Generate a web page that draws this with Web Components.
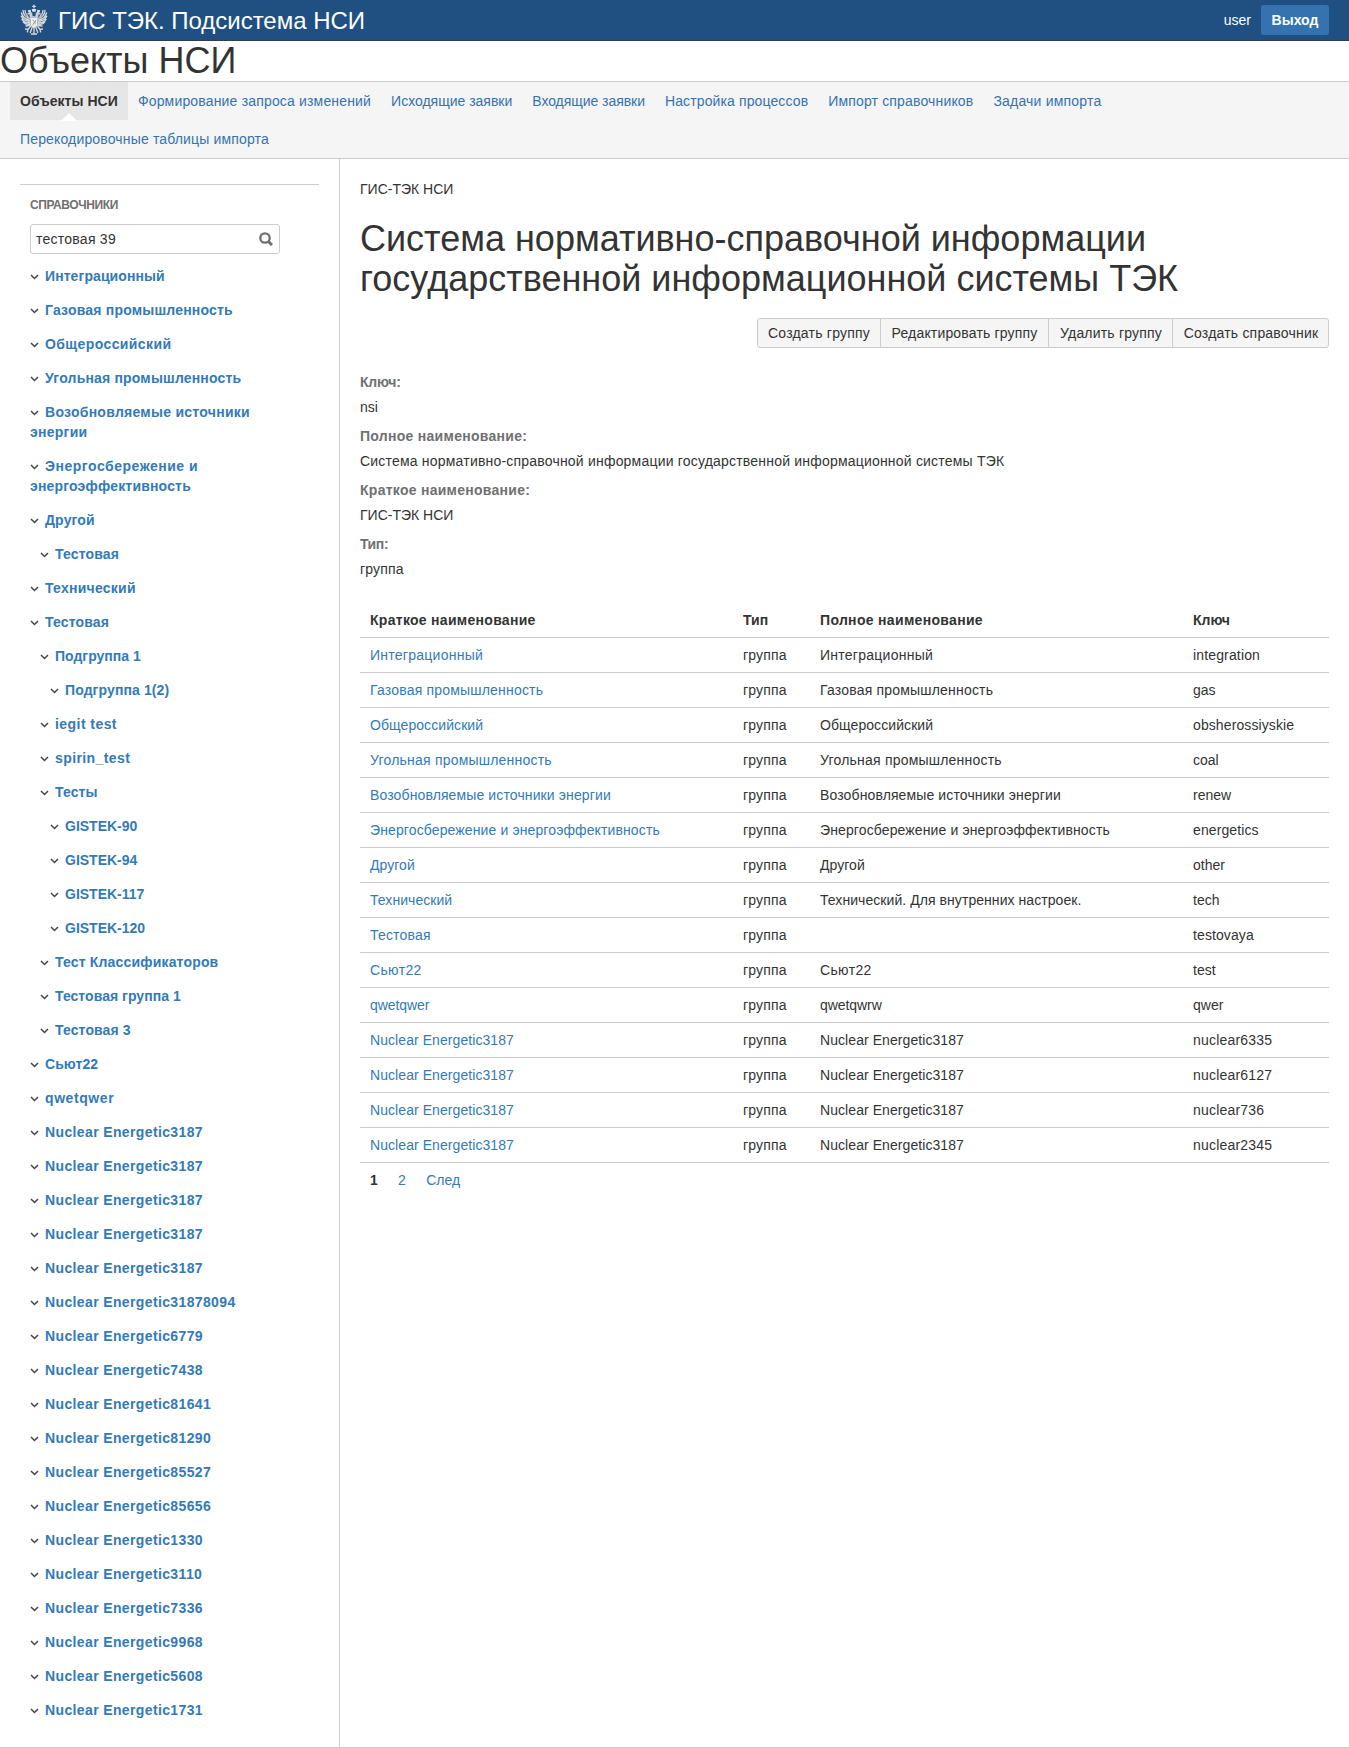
<!DOCTYPE html>
<html lang="ru">
<head>
<meta charset="utf-8">
<title>ГИС ТЭК. Подсистема НСИ</title>
<style>
html,body{margin:0;padding:0;background:#fff}
body{font:14px/20px "Liberation Sans",Arial,sans-serif;color:#333}
</style>
</head>
<body>
<nsi-app></nsi-app>
<script>
const define = (name, html) => customElements.define(name, class extends HTMLElement {
  connectedCallback() {
    if (this.shadowRoot) return;
    this.attachShadow({ mode: 'open' }).innerHTML = typeof html === 'function' ? html(this) : html;
  }
});
const ls = v => `style="letter-spacing:${v}px"`;

define('nsi-emblem', `
<style>:host{display:block;width:28px;height:32px}svg{display:block}</style>
<svg width="28" height="32" viewBox="0 0 28 32" fill="none" stroke="#d8d9db" stroke-linecap="round">
  <path d="M14 1v3M12.700 2.400h2.600" stroke-width="1.200"/>
  <path d="M11.800 5h4.400l-.6 2.700h-3.200zM7.800 6.300l2.800-.6.400 2.300H8.200zM20.200 6.300l-2.800-.6-.4 2.300h2.800z" fill="#e2e2e3" stroke="none"/>
  <path d="M11.400 8.300c-2-.9-4 .2-4.400 2.200l2.500.1c-.2 2 .4 3 2 4.500h5c1.600-1.500 2.200-2.500 2-4.500l2.500-.1c-.4-2-2.400-3.100-4.400-2.200-.9.500-1.200 2-1.100 4h-3c.1-2-.2-3.500-1.100-4z" fill="#cfd0d2" stroke="none"/>
  <g stroke-width="1.350">
    <path d="M10.500 14.500C6.500 14 3.500 11 3 6.500M9.500 16C5.500 15.500 2.500 13 1.500 9M9.500 17.300C6 17.300 2.800 15.500 1.300 12.300M9.800 18.700C7 19 3.600 18 2 15.300M10.200 20C8 20.600 5 20 3.500 18.200M8 12.500C6 11 5.300 9.500 5 6.500M10 21.300L6 22"/>
    <path d="M17.500 14.500C21.500 14 24.500 11 25 6.500M18.500 16C22.500 15.500 25.500 13 26.500 9M18.500 17.300C22 17.300 25.200 15.500 26.700 12.300M18.200 18.700C21 19 24.400 18 26 15.300M17.800 20C20 20.600 23 20 24.500 18.200M20 12.500C22 11 22.700 9.500 23 6.500M18 21.300L22 22"/>
    <path d="M11 21.500L8 25.500 5.500 25M8 25.500l-.6 2.300M17 21.500l3 4 2.500-.5M20 25.500l.6 2.300M14 23v7M12.300 23l-2 5.500M15.700 23l2 5.500M11.500 30h5"/>
  </g>
  <path d="M10.300 13.500h7.400V20c0 2-1.700 3.200-3.700 4.200-2-1-3.700-2.200-3.700-4.200z" fill="#eeeeef" stroke="#a5adb7" stroke-width=".6"/>
  <path d="M13 16l1.500 2-1.500 3M15.500 16.500l-.5 3" stroke="#858c94" stroke-width=".8"/>
</svg>`);

define('nsi-header', `
<style>
:host{display:flex;align-items:center;box-sizing:border-box;height:41px;padding:0 20px;background:#205081;border-bottom:1px solid #2e3d54;color:#fff}
.title{font-size:24px;line-height:38px;padding-top:2px;margin-left:10px;flex:1;letter-spacing:-.02px}
.user{margin-right:10px}
button{font:bold 14px/20px "Liberation Sans",Arial,sans-serif;color:#fff;background:#3572b0;border:0;border-radius:3px;height:30px;width:68px;padding:0}
</style>
<nsi-emblem></nsi-emblem><span class="title">ГИС ТЭК. Подсистема НСИ</span><span class="user">user</span><button>Выход</button>`);

define('nsi-nav-item', e => `
<style>
:host{display:block;position:relative;padding:9px 10px;line-height:20px;color:#3572b0;white-space:nowrap}
:host([selected]){background:#e6e6e6;color:#333;font-weight:bold}
svg{position:absolute;left:50%;margin-left:-8px;bottom:-1px}
</style><slot></slot>${e.hasAttribute('selected') ? '<svg width="16" height="8"><path d="M0 8L8 0l8 8z" fill="#fff"/></svg>' : ''}`);

const nav = [['Объекты НСИ', .05], ['Формирование запроса изменений', .17], ['Исходящие заявки', -.01], ['Входящие заявки', -.05], ['Настройка процессов', .12], ['Импорт справочников', .16], ['Задачи импорта', .2], ['Перекодировочные таблицы импорта', .155]];
define('nsi-nav', `
<style>:host{display:flex;flex-wrap:wrap;padding:0 10px;background:#f5f5f5;border:solid #ccc;border-width:1px 0}</style>
${nav.map(([t, s], i) => `<nsi-nav-item ${i ? '' : 'selected'} ${ls(s)}>${t}</nsi-nav-item>`).join('')}`);

define('nsi-search', `
<style>
:host{display:flex;align-items:center;box-sizing:border-box;width:250px;height:30px;border:1px solid #ccc;border-radius:3px;padding:0 6px 0 5px;background:#fff}
span{flex:1;letter-spacing:.25px}
</style>
<span>тестовая 39</span>
<svg width="14" height="14" fill="none" stroke="#707070" stroke-width="2.300"><circle cx="6" cy="6" r="4.700"/><path d="M9.500 9.500L13 13" stroke-width="3"/></svg>`);

define('nsi-tree-item', `
<style>
:host{display:block;padding:7px 0 7px calc(var(--level,0)*10px);width:238px;color:#337ab7;font-weight:bold}
svg{display:inline-block;width:9px;height:6px;margin-right:6px;vertical-align:1px}
</style><svg viewBox="0 0 9 6" fill="none" stroke="#444" stroke-width="1.500"><path d="M1 1l3.500 3.500L8 1"/></svg><slot></slot>`);

const tree = [[0,'Интеграционный',.08],[0,'Газовая промышленность',.2],[0,'Общероссийский',.4],[0,'Угольная промышленность',.18],[0,'Возобновляемые источники энергии',.27],[0,'Энергосбережение и <span style="letter-spacing:.18px">энергоэффективность</span>',.52],[0,'Другой',.15],[1,'Тестовая',.16],[0,'Технический',.25],[0,'Тестовая',.16],[1,'Подгруппа 1',0],[2,'Подгруппа 1(2)',.1],[1,'iegit test',.44],[1,'spirin_test',.4],[1,'Тесты',.1],[2,'GISTEK-90',0],[2,'GISTEK-94',0],[2,'GISTEK-117',0],[2,'GISTEK-120',0],[1,'Тест Классификаторов',.17],[1,'Тестовая группа 1',.04],[1,'Тестовая 3',.12],[0,'Сьют22',.05],[0,'qwetqwer',.58],
...['3187','3187','3187','3187','3187','31878094','6779','7438','81641','81290','85527','85656','1330','3110','7336','9968','5608','1731'].map(n => [0,'Nuclear Energetic' + n,.37])];

define('nsi-sidebar', `
<style>
:host{display:block;box-sizing:border-box;width:340px;padding:25px 20px 20px;border-right:1px solid #ccc}
section{border-top:1px solid #ccc;padding:10px 10px 0}
h5{margin:0 0 9px;font-size:12px;line-height:20px;color:#707070;letter-spacing:-.4px}
nsi-search{margin-bottom:5px}
</style>
<section><h5>СПРАВОЧНИКИ</h5><nsi-search></nsi-search>${tree.map(([l, t, s]) => `<nsi-tree-item style="--level:${l};letter-spacing:${s}px">${t}</nsi-tree-item>`).join('')}</section>`);

define('nsi-toolbar', `
<style>
:host{display:flex;justify-content:flex-end}
div{display:flex;border:1px solid #ccc;border-radius:3px;background:#f5f5f5}
span{box-sizing:border-box;padding:4px 0;line-height:20px;text-align:center;white-space:nowrap;border-left:1px solid #ccc}
span:first-child{border-left:0}
</style><div><span style="width:122px;letter-spacing:.22px">Создать группу</span><span style="width:168px;letter-spacing:.17px">Редактировать группу</span><span style="width:124px;letter-spacing:.19px;padding-left:1px">Удалить группу</span><span style="width:156px;letter-spacing:.2px;padding-left:1px">Создать справочник</span></div>`);

define('nsi-field', e => `
<style>:host{display:block;height:54px}b{display:block;line-height:20px;margin-bottom:5px;color:#707070}</style>
<b ${ls(e.getAttribute('track'))}>${e.getAttribute('label')}</b><slot></slot>`);

const same = (n, k, s, ks = 0) => [n, n, k, s, s, ks];
const rows = [same('Интеграционный','integration',.26,.15),same('Газовая промышленность','gas',.19),same('Общероссийский','obsherossiyskie',.08,.1),same('Угольная промышленность','coal',.21),same('Возобновляемые источники энергии','renew',.12),same('Энергосбережение и энергоэффективность','energetics',.12,.1),same('Другой','other',.05),['Технический','Технический. Для внутренних настроек.','tech',.05,.06,0],['Тестовая','','testovaya',.18,0,.1],same('Сьют22','test',.35),['qwetqwer','qwetqwrw','qwer',-.07,-.07,0],
...['nuclear6335','nuclear6127','nuclear736','nuclear2345'].map(k => same('Nuclear Energetic3187', k, .07, .2))];

define('nsi-table', `
<style>
:host{display:block}
.row{display:grid;grid-template-columns:373px 77px 373px 1fr;height:34px;align-items:center;border-bottom:1px solid #ccc}
.row>*{padding-left:10px}
.head{font-weight:bold}
a{color:#337ab7}
</style>
<div class="row head"><span ${ls(.29)}>Краткое наименование</span><span>Тип</span><span ${ls(.32)}>Полное наименование</span><span>Ключ</span></div>
${rows.map(r => `<div class="row"><a ${ls(r[3])}>${r[0]}</a><span ${ls(.17)}>группа</span><span ${ls(r[4])}>${r[1]}</span><span ${ls(r[5])}>${r[2]}</span></div>`).join('')}`);

define('nsi-pager', `
<style>:host{display:flex;gap:20.300px;padding:7px 10px;color:#337ab7}b{color:#333}</style><b>1</b><span>2</span><span>След</span>`);

define('nsi-content', `
<style>
:host{display:block;flex:1;padding:20px}
h1{margin:20px 0 19px;font-size:36px;line-height:40px;font-weight:normal}
nsi-toolbar{margin-bottom:24px}
nsi-table{margin-top:15px}
</style>
<div>ГИС-ТЭК НСИ</div>
<h1>Система нормативно-справочной информации<br>государственной информационной системы ТЭК</h1>
<nsi-toolbar></nsi-toolbar>
<nsi-field label="Ключ:" track="-.2">nsi</nsi-field>
<nsi-field label="Полное наименование:" track=".28"><span ${ls(.2)}>Система нормативно-справочной информации государственной информационной системы ТЭК</span></nsi-field>
<nsi-field label="Краткое наименование:" track=".27">ГИС-ТЭК НСИ</nsi-field>
<nsi-field label="Тип:" track="-.4"><span ${ls(.17)}>группа</span></nsi-field>
<nsi-table></nsi-table>
<nsi-pager></nsi-pager>`);

define('nsi-app', `
<style>
:host{display:block}
h1{margin:0;font-size:36px;line-height:40px;font-weight:normal}
main{display:flex;border-bottom:1px solid #ccc}
</style>
<nsi-header></nsi-header><h1>Объекты НСИ</h1><nsi-nav></nsi-nav>
<main><nsi-sidebar></nsi-sidebar><nsi-content></nsi-content></main>`);
</script>
</body>
</html>
